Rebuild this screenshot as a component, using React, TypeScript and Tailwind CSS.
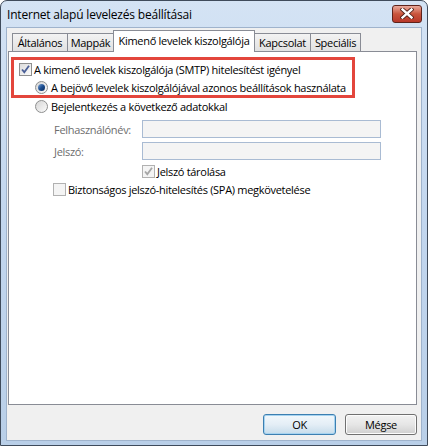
import React from "react";

const font = { fontFamily: '"Open Sans", "Noto Sans", sans-serif' };

function CheckBox({ checked, disabled }: { checked?: boolean; disabled?: boolean }) {
  return (
    <div
      className={`w-[13px] h-[13px] shrink-0 border flex items-center justify-center ${
        disabled ? "border-[#b1b1b1] bg-[#f4f4f4]" : "border-[#8e8f8f] bg-gradient-to-br from-[#dcdcdc] to-[#fbfbfb]"
      }`}
    >
      {checked && (
        <svg width="11" height="11" viewBox="0 0 11 11">
          <path
            d="M2 5.5 L4.3 8.2 L9 1.8"
            fill="none"
            stroke={disabled ? "#a6a6a6" : "#4a5f97"}
            strokeWidth="1.8"
          />
        </svg>
      )}
    </div>
  );
}

function Radio({ checked }: { checked?: boolean }) {
  return (
    <div className="w-[13px] h-[13px] shrink-0 rounded-full border border-[#8e8f8f] bg-gradient-to-br from-[#d6d6d6] to-[#fbfbfb] flex items-center justify-center">
      {checked && (
        <div className="w-[7px] h-[7px] rounded-full bg-gradient-to-br from-[#7aa3d4] via-[#1d4f91] to-[#0a2a5c]" />
      )}
    </div>
  );
}

const tabs = [
  { label: "Általános", w: "w-[56px]" },
  { label: "Mappák", w: "w-[47px]" },
];
const tabsAfter = [
  { label: "Kapcsolat", w: "w-[57px]" },
  { label: "Speciális", w: "w-[51px]" },
];

function Tab({ label, w }: { label: string; w: string }) {
  return (
    <div
      className={`${w} h-[18px] -ml-px first:ml-0 border border-b-0 border-[#898c95] bg-gradient-to-b from-[#f3f3f3] to-[#e1e1e1] flex items-center justify-center text-black`}
    >
      {label}
    </div>
  );
}

export default function App() {
  return (
    <div
      className="w-[428px] h-[446px] text-[11px] tracking-[-0.3px] leading-[13px] text-black select-none"
      style={font}
    >
      <div className="w-full h-full rounded-t-[7px] border border-[#3f4b5b] bg-gradient-to-b from-[#d4e3f4] via-[#c2d6ee] to-[#b9cfe8] flex flex-col">
        {/* Title bar */}
        <div className="h-[26px] flex items-center justify-between pl-[6px] pr-[5px] pt-[1px]">
          <span className="text-[12px] tracking-[-0.2px] text-black">Internet alapú levelezés beállításai</span>
          <div className="w-[30px] h-[18px] mt-[-2px] rounded-[3px] border border-[#5e231b] bg-gradient-to-b from-[#e8a99c] via-[#c9543c] to-[#b8382a] flex items-center justify-center">
            <svg width="14" height="11" viewBox="0 0 14 11">
              <path d="M2.5 1.5 L11.5 9.5 M11.5 1.5 L2.5 9.5" stroke="#4b1d16" strokeWidth="4.2" strokeLinecap="square" />
              <path d="M2.5 1.5 L11.5 9.5 M11.5 1.5 L2.5 9.5" stroke="#ffffff" strokeWidth="2.4" strokeLinecap="square" />
            </svg>
          </div>
        </div>

        {/* Client area */}
        <div className="flex-1 mx-[5px] mb-[4px] bg-[#f0f0f0] border border-[#9fb3cc] flex flex-col px-[1px]">
          {/* Tabs */}
          <div className="flex items-end h-[23px] pl-[4px]">
            {tabs.map((t) => (
              <Tab key={t.label} {...t} />
            ))}
            <div className="w-[142px] h-[22px] -ml-px -mb-px border border-b-0 border-[#898c95] bg-white flex items-center justify-center relative z-10 pb-[2px]">
              Kimenő levelek kiszolgálója
            </div>
            {tabsAfter.map((t) => (
              <Tab key={t.label} {...t} />
            ))}
          </div>

          {/* Panel */}
          <div className="w-[409px] h-[354px] bg-white border border-[#898c95] flex flex-col">
            <div className="ml-[2px] mt-[5px] w-[344px] h-[41px] border-[3px] border-[#e3463c] flex flex-col">
              <div className="flex items-center mt-[3px] pl-[5px] h-[13px] gap-[2px]">
                <CheckBox checked />
                <span>A kimenő levelek kiszolgálója (SMTP) hitelesítést igényel</span>
              </div>
              <div className="flex items-center mt-[5px] pl-[21px] h-[13px] gap-[3px]">
                <Radio checked />
                <span>A bejövő levelek kiszolgálójával azonos beállítások használata</span>
              </div>
            </div>

            <div className="flex items-center mt-[2px] pl-[26px] h-[13px] gap-[3px]">
              <Radio />
              <span>Bejelentkezés a következő adatokkal</span>
            </div>

            <div className="flex items-center mt-[7px] pl-[45px] h-[18px]">
              <span className="w-[88px] text-[#6d6d6d]">Felhasználónév:</span>
              <div className="w-[239px] h-[18px] border border-[#a9bbd3] bg-[#f4f4f4]" />
            </div>
            <div className="flex items-center mt-[4px] pl-[45px] h-[18px]">
              <span className="w-[88px] text-[#6d6d6d]">Jelszó:</span>
              <div className="w-[239px] h-[18px] border border-[#a9bbd3] bg-[#f4f4f4]" />
            </div>

            <div className="flex items-center mt-[5px] pl-[133px] h-[13px] gap-[2px]">
              <CheckBox checked disabled />
              <span>Jelszó tárolása</span>
            </div>
            <div className="flex items-center mt-[5px] pl-[44px] h-[13px] gap-[2px]">
              <CheckBox disabled />
              <span>Biztonságos jelszó-hitelesítés (SPA) megkövetelése</span>
            </div>
          </div>

          {/* Buttons */}
          <div className="flex justify-end gap-[9px] w-[409px] mt-[9px]">
            <button className="w-[73px] h-[21px] rounded-[3px] border border-[#3c7fb1] bg-gradient-to-b from-[#f2f8fc] via-[#e4eef6] to-[#c6dceb] shadow-[inset_0_0_0_1px_#a6d3f0] text-black">
              OK
            </button>
            <button className="w-[72px] h-[21px] rounded-[3px] border border-[#707070] bg-gradient-to-b from-[#f2f2f2] via-[#e6e6e6] to-[#cfcfcf] shadow-[inset_0_0_0_1px_#fcfcfc] text-black">
              Mégse
            </button>
          </div>
        </div>
      </div>
    </div>
  );
}
